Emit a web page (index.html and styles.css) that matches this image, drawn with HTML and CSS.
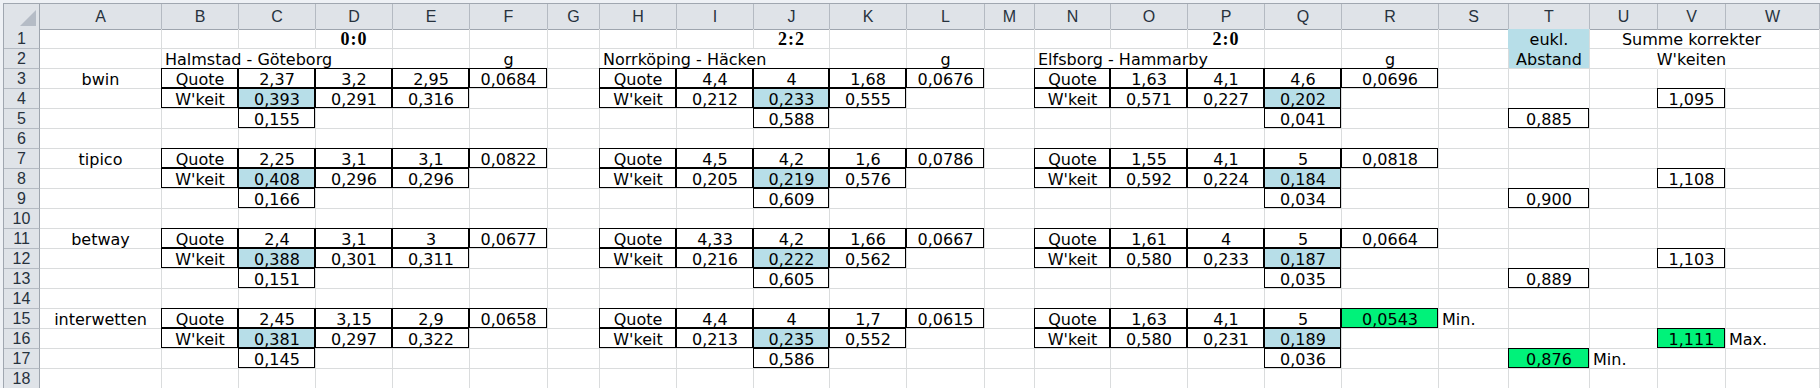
FILE: index.html
```html
<!DOCTYPE html>
<html lang="de">
<head>
<meta charset="utf-8">
<title>Quoten</title>
<link rel="stylesheet" href="styles.css">
</head>
<body>
<div class="frame">
<div class="sheet">
  <div class="row hrow">
    <div class="corner"><svg width="16" height="16" viewBox="0 0 16 16"><polygon points="16,0 16,16 0,16" fill="#b5bcc6"/></svg></div>
    <div class="ch">A</div><div class="ch">B</div><div class="ch">C</div><div class="ch">D</div><div class="ch">E</div><div class="ch">F</div><div class="ch">G</div><div class="ch">H</div><div class="ch">I</div><div class="ch">J</div><div class="ch">K</div><div class="ch">L</div><div class="ch">M</div><div class="ch">N</div><div class="ch">O</div><div class="ch">P</div><div class="ch">Q</div><div class="ch">R</div><div class="ch">S</div><div class="ch">T</div><div class="ch">U</div><div class="ch">V</div><div class="ch">W</div>
  </div>

  <div class="row">
    <div class="rh">1</div>
    <div class="c"></div><div class="c"></div><div class="c"></div><div class="c hd">0:0</div><div class="c"></div><div class="c"></div><div class="c"></div><div class="c"></div><div class="c"></div><div class="c hd">2:2</div><div class="c"></div><div class="c"></div><div class="c"></div><div class="c"></div><div class="c"></div><div class="c hd">2:0</div><div class="c"></div><div class="c"></div><div class="c"></div><div class="c bl bl-top">eukl.</div><div class="c nr"></div><div class="c nr">Summe korrekter</div><div class="c"></div>
  </div>

  <div class="row">
    <div class="rh">2</div>
    <div class="c"></div><div class="c l span3">Halmstad - Göteborg</div><div class="c"></div><div class="c">g</div><div class="c"></div><div class="c l span3">Norrköping - Häcken</div><div class="c"></div><div class="c">g</div><div class="c"></div><div class="c l span3">Elfsborg - Hammarby</div><div class="c"></div><div class="c">g</div><div class="c"></div><div class="c bl">Abstand</div><div class="c nr"></div><div class="c nr">W'keiten</div><div class="c"></div>
  </div>

  <div class="row">
    <div class="rh">3</div>
    <div class="c">bwin</div><div class="c bx">Quote</div><div class="c bx">2,37</div><div class="c bx">3,2</div><div class="c bx">2,95</div><div class="c bx">0,0684</div><div class="c"></div><div class="c bx">Quote</div><div class="c bx">4,4</div><div class="c bx">4</div><div class="c bx">1,68</div><div class="c bx">0,0676</div><div class="c"></div><div class="c bx">Quote</div><div class="c bx">1,63</div><div class="c bx">4,1</div><div class="c bx">4,6</div><div class="c bx">0,0696</div><div class="c"></div><div class="c"></div><div class="c"></div><div class="c"></div><div class="c"></div>
  </div>

  <div class="row">
    <div class="rh">4</div>
    <div class="c"></div><div class="c bx">W'keit</div><div class="c bx bl">0,393</div><div class="c bx">0,291</div><div class="c bx">0,316</div><div class="c"></div><div class="c"></div><div class="c bx">W'keit</div><div class="c bx">0,212</div><div class="c bx bl">0,233</div><div class="c bx">0,555</div><div class="c"></div><div class="c"></div><div class="c bx">W'keit</div><div class="c bx">0,571</div><div class="c bx">0,227</div><div class="c bx bl">0,202</div><div class="c"></div><div class="c"></div><div class="c"></div><div class="c"></div><div class="c bx">1,095</div><div class="c"></div>
  </div>

  <div class="row">
    <div class="rh">5</div>
    <div class="c"></div><div class="c"></div><div class="c bx">0,155</div><div class="c"></div><div class="c"></div><div class="c"></div><div class="c"></div><div class="c"></div><div class="c"></div><div class="c bx">0,588</div><div class="c"></div><div class="c"></div><div class="c"></div><div class="c"></div><div class="c"></div><div class="c"></div><div class="c bx">0,041</div><div class="c"></div><div class="c"></div><div class="c bx">0,885</div><div class="c"></div><div class="c"></div><div class="c"></div>
  </div>

  <div class="row">
    <div class="rh">6</div>
    <div class="c"></div><div class="c"></div><div class="c"></div><div class="c"></div><div class="c"></div><div class="c"></div><div class="c"></div><div class="c"></div><div class="c"></div><div class="c"></div><div class="c"></div><div class="c"></div><div class="c"></div><div class="c"></div><div class="c"></div><div class="c"></div><div class="c"></div><div class="c"></div><div class="c"></div><div class="c"></div><div class="c"></div><div class="c"></div><div class="c"></div>
  </div>

  <div class="row">
    <div class="rh">7</div>
    <div class="c">tipico</div><div class="c bx">Quote</div><div class="c bx">2,25</div><div class="c bx">3,1</div><div class="c bx">3,1</div><div class="c bx">0,0822</div><div class="c"></div><div class="c bx">Quote</div><div class="c bx">4,5</div><div class="c bx">4,2</div><div class="c bx">1,6</div><div class="c bx">0,0786</div><div class="c"></div><div class="c bx">Quote</div><div class="c bx">1,55</div><div class="c bx">4,1</div><div class="c bx">5</div><div class="c bx">0,0818</div><div class="c"></div><div class="c"></div><div class="c"></div><div class="c"></div><div class="c"></div>
  </div>

  <div class="row">
    <div class="rh">8</div>
    <div class="c"></div><div class="c bx">W'keit</div><div class="c bx bl">0,408</div><div class="c bx">0,296</div><div class="c bx">0,296</div><div class="c"></div><div class="c"></div><div class="c bx">W'keit</div><div class="c bx">0,205</div><div class="c bx bl">0,219</div><div class="c bx">0,576</div><div class="c"></div><div class="c"></div><div class="c bx">W'keit</div><div class="c bx">0,592</div><div class="c bx">0,224</div><div class="c bx bl">0,184</div><div class="c"></div><div class="c"></div><div class="c"></div><div class="c"></div><div class="c bx">1,108</div><div class="c"></div>
  </div>

  <div class="row">
    <div class="rh">9</div>
    <div class="c"></div><div class="c"></div><div class="c bx">0,166</div><div class="c"></div><div class="c"></div><div class="c"></div><div class="c"></div><div class="c"></div><div class="c"></div><div class="c bx">0,609</div><div class="c"></div><div class="c"></div><div class="c"></div><div class="c"></div><div class="c"></div><div class="c"></div><div class="c bx">0,034</div><div class="c"></div><div class="c"></div><div class="c bx">0,900</div><div class="c"></div><div class="c"></div><div class="c"></div>
  </div>

  <div class="row">
    <div class="rh">10</div>
    <div class="c"></div><div class="c"></div><div class="c"></div><div class="c"></div><div class="c"></div><div class="c"></div><div class="c"></div><div class="c"></div><div class="c"></div><div class="c"></div><div class="c"></div><div class="c"></div><div class="c"></div><div class="c"></div><div class="c"></div><div class="c"></div><div class="c"></div><div class="c"></div><div class="c"></div><div class="c"></div><div class="c"></div><div class="c"></div><div class="c"></div>
  </div>

  <div class="row">
    <div class="rh">11</div>
    <div class="c">betway</div><div class="c bx">Quote</div><div class="c bx">2,4</div><div class="c bx">3,1</div><div class="c bx">3</div><div class="c bx">0,0677</div><div class="c"></div><div class="c bx">Quote</div><div class="c bx">4,33</div><div class="c bx">4,2</div><div class="c bx">1,66</div><div class="c bx">0,0667</div><div class="c"></div><div class="c bx">Quote</div><div class="c bx">1,61</div><div class="c bx">4</div><div class="c bx">5</div><div class="c bx">0,0664</div><div class="c"></div><div class="c"></div><div class="c"></div><div class="c"></div><div class="c"></div>
  </div>

  <div class="row">
    <div class="rh">12</div>
    <div class="c"></div><div class="c bx">W'keit</div><div class="c bx bl">0,388</div><div class="c bx">0,301</div><div class="c bx">0,311</div><div class="c"></div><div class="c"></div><div class="c bx">W'keit</div><div class="c bx">0,216</div><div class="c bx bl">0,222</div><div class="c bx">0,562</div><div class="c"></div><div class="c"></div><div class="c bx">W'keit</div><div class="c bx">0,580</div><div class="c bx">0,233</div><div class="c bx bl">0,187</div><div class="c"></div><div class="c"></div><div class="c"></div><div class="c"></div><div class="c bx">1,103</div><div class="c"></div>
  </div>

  <div class="row">
    <div class="rh">13</div>
    <div class="c"></div><div class="c"></div><div class="c bx">0,151</div><div class="c"></div><div class="c"></div><div class="c"></div><div class="c"></div><div class="c"></div><div class="c"></div><div class="c bx">0,605</div><div class="c"></div><div class="c"></div><div class="c"></div><div class="c"></div><div class="c"></div><div class="c"></div><div class="c bx">0,035</div><div class="c"></div><div class="c"></div><div class="c bx">0,889</div><div class="c"></div><div class="c"></div><div class="c"></div>
  </div>

  <div class="row">
    <div class="rh">14</div>
    <div class="c"></div><div class="c"></div><div class="c"></div><div class="c"></div><div class="c"></div><div class="c"></div><div class="c"></div><div class="c"></div><div class="c"></div><div class="c"></div><div class="c"></div><div class="c"></div><div class="c"></div><div class="c"></div><div class="c"></div><div class="c"></div><div class="c"></div><div class="c"></div><div class="c"></div><div class="c"></div><div class="c"></div><div class="c"></div><div class="c"></div>
  </div>

  <div class="row">
    <div class="rh">15</div>
    <div class="c">interwetten</div><div class="c bx">Quote</div><div class="c bx">2,45</div><div class="c bx">3,15</div><div class="c bx">2,9</div><div class="c bx">0,0658</div><div class="c"></div><div class="c bx">Quote</div><div class="c bx">4,4</div><div class="c bx">4</div><div class="c bx">1,7</div><div class="c bx">0,0615</div><div class="c"></div><div class="c bx">Quote</div><div class="c bx">1,63</div><div class="c bx">4,1</div><div class="c bx">5</div><div class="c bx gr">0,0543</div><div class="c l">Min.</div><div class="c"></div><div class="c"></div><div class="c"></div><div class="c"></div>
  </div>

  <div class="row">
    <div class="rh">16</div>
    <div class="c"></div><div class="c bx">W'keit</div><div class="c bx bl">0,381</div><div class="c bx">0,297</div><div class="c bx">0,322</div><div class="c"></div><div class="c"></div><div class="c bx">W'keit</div><div class="c bx">0,213</div><div class="c bx bl">0,235</div><div class="c bx">0,552</div><div class="c"></div><div class="c"></div><div class="c bx">W'keit</div><div class="c bx">0,580</div><div class="c bx">0,231</div><div class="c bx bl">0,189</div><div class="c"></div><div class="c"></div><div class="c"></div><div class="c"></div><div class="c bx gr">1,111</div><div class="c l">Max.</div>
  </div>

  <div class="row">
    <div class="rh">17</div>
    <div class="c"></div><div class="c"></div><div class="c bx">0,145</div><div class="c"></div><div class="c"></div><div class="c"></div><div class="c"></div><div class="c"></div><div class="c"></div><div class="c bx">0,586</div><div class="c"></div><div class="c"></div><div class="c"></div><div class="c"></div><div class="c"></div><div class="c"></div><div class="c bx">0,036</div><div class="c"></div><div class="c"></div><div class="c bx gr">0,876</div><div class="c l">Min.</div><div class="c"></div><div class="c"></div>
  </div>

  <div class="row">
    <div class="rh">18</div>
    <div class="c"></div><div class="c"></div><div class="c"></div><div class="c"></div><div class="c"></div><div class="c"></div><div class="c"></div><div class="c"></div><div class="c"></div><div class="c"></div><div class="c"></div><div class="c"></div><div class="c"></div><div class="c"></div><div class="c"></div><div class="c"></div><div class="c"></div><div class="c"></div><div class="c"></div><div class="c"></div><div class="c"></div><div class="c"></div><div class="c"></div>
  </div>
</div>
</div>
</body>
</html>
```

FILE: styles.css
```css
* { box-sizing: border-box; }
html, body { margin: 0; padding: 0; background: #fff; }
body { width: 1820px; height: 388px; overflow: hidden; }

.frame {
  border-top: 3px solid #eef1f5;
  border-left: 3px solid #eef1f5;
}
.sheet {
  border-top: 1px solid #a0a7b0;
  border-left: 1px solid #a0a7b0;
  font-family: "DejaVu Sans", "Liberation Sans", sans-serif;
  font-size: 16px;
  color: #000;
}
.row {
  display: grid;
  grid-template-columns: 36px 122px 77px 77px 77px 77px 78px 52px 77px 77px 76px 77px 78px 50px 76px 77px 77px 77px 97px 70px 81px 68px 68px 1fr;
  height: 20px;
}
.hrow { height: 25px; }

.corner {
  background: #dfe3e8;
  border-right: 1px solid #9ea5ae;
  border-bottom: 1px solid #9ea5ae;
  display: flex;
  align-items: flex-end;
  justify-content: flex-end;
  padding: 0 3px 3px 0;
}
.ch {
  background: #dfe3e8;
  border-right: 1px solid #b4bac2;
  border-bottom: 1px solid #9ea5ae;
  font-family: "Liberation Sans", "DejaVu Sans", sans-serif;
  font-size: 16px;
  color: #27323d;
  text-align: center;
  line-height: 25px;
}
.rh {
  background: #dfe3e8;
  border-right: 1px solid #9ea5ae;
  border-bottom: 1px solid #b4bac2;
  font-family: "Liberation Sans", "DejaVu Sans", sans-serif;
  font-size: 16px;
  color: #27323d;
  text-align: center;
  line-height: 19px;
}

.c {
  border-right: 1px solid #dadcdd;
  border-bottom: 1px solid #dadcdd;
  display: flex;
  justify-content: center;
  white-space: nowrap;
  line-height: 21px;
  height: 20px;
  min-width: 0;
}
.c.l { justify-content: flex-start; padding-left: 3px; }
.span3 { grid-column: span 3; }
.nr { border-right-color: transparent; }
.hd {
  font-family: "Liberation Serif", "DejaVu Serif", serif;
  font-weight: bold;
  font-size: 18px;
  letter-spacing: 1px;
}

.bx { position: relative; }
.bx::after {
  content: "";
  position: absolute;
  top: -1px;
  left: -1px;
  right: 0;
  bottom: 0;
  border: 1px solid #000;
  pointer-events: none;
}
.bl { background: #b7dee8; }
.bl-top { border-bottom-color: #b7dee8; box-shadow: -1px 0 0 #b7dee8; }
.gr { background: #00f27a; }
```
